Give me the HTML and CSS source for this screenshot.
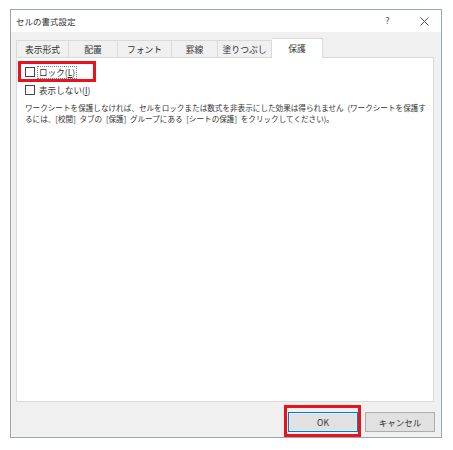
FILE: index.html
```html
<!DOCTYPE html>
<html lang="ja">
<head>
<meta charset="utf-8">
<link rel="stylesheet" href="styles.css">
</head>
<body>
<div class="window">
  <div class="titlebar">
    <span class="title">セルの書式設定</span>
    <span class="help">?</span>
    <span class="close">
      <svg width="9" height="9" viewBox="0 0 9 9"><path d="M0.5 0.5 L8.5 8.5 M8.5 0.5 L0.5 8.5" stroke="#555" stroke-width="1" fill="none"/></svg>
    </span>
  </div>
  <div class="body">
    <div class="tabs">
      <div class="tab t1">表示形式</div>
      <div class="tab t2">配置</div>
      <div class="tab t3">フォント</div>
      <div class="tab t4">罫線</div>
      <div class="tab t5">塗りつぶし</div>
      <div class="tab active">保護</div>
    </div>
    <div class="panel">
      <div class="check first">
        <span class="box"></span><span class="label focus">ロック(<u>L</u>)</span>
        <span class="redbox redbox-lock"></span>
      </div>
      <div class="check">
        <span class="box"></span><span class="label">表示しない(<u>I</u>)</span>
      </div>
      <p class="note">ワークシートを保護しなければ、セルをロックまたは数式を非表示にした効果は得られません (ワークシートを保護す<br>るには、[校閲] タブの [保護] グループにある [シートの保護] をクリックしてください)。</p>
    </div>
    <div class="buttons">
      <div class="btn ok">OK<span class="redbox redbox-ok"></span></div>
      <div class="btn">キャンセル</div>
    </div>
  </div>
</div>
</body>
</html>
```

FILE: styles.css
```css
html, body {
  margin: 0;
  padding: 0;
  background: #ffffff;
}
body {
  font-family: "Noto Sans CJK JP", "Noto Sans", sans-serif;
  color: #333;
}
.window {
  margin: 9px 0 0 10px;
  width: 432px;
  height: 429px;
  box-sizing: border-box;
  border: 1px solid #9ba6b3;
  background: #f0f0f0;
  display: flex;
  flex-direction: column;
}
.titlebar {
  height: 22px;
  background: #ffffff;
  display: flex;
  align-items: center;
  padding-left: 5px;
  font-size: 8.5px;
  color: #333;
}
.title {
  flex: 1;
}
.help {
  width: 12px;
  font-size: 9px;
  color: #555;
  margin-right: 23px;
  font-family: "DejaVu Sans", sans-serif;
}
.close {
  width: 9px;
  height: 9px;
  margin-right: 12px;
  display: flex;
}
.body {
  flex: 1;
  padding: 6px 6px 0 5px;
  display: flex;
  flex-direction: column;
}
.tabs {
  display: flex;
  height: 19px;
  align-items: flex-end;
}
.tab {
  height: 17px;
  box-sizing: border-box;
  border: 1px solid #dadada;
  border-bottom: none;
  border-left: none;
  font-size: 8.8px;
  display: flex;
  align-items: center;
  justify-content: center;
  color: #333;
  background: #f0f0f0;
}
.t1 { width: 53px; border-left: 1px solid #dadada; }
.t2 { width: 49px; }
.t3 { width: 54px; }
.t4 { width: 46px; }
.t5 { width: 54px; }
.tab.active {
  width: 51px;
  height: 20px;
  background: #ffffff;
  margin-bottom: -1px;
  position: relative;
  z-index: 1;
}
.panel {
  height: 345px;
  box-sizing: border-box;
  background: #ffffff;
  border: 1px solid #dadada;
  margin-right: 1px;
  padding: 8px 8px 0 8px;
}
.check {
  display: flex;
  align-items: center;
  height: 12px;
  margin-bottom: 6px;
  position: relative;
}
.box {
  width: 8px;
  height: 8px;
  border: 1px solid #444;
  background: #fff;
  margin-right: 3px;
}
.label {
  font-size: 8.6px;
  line-height: 11px;
  padding: 0 1px;
  color: #333;
}
.label.focus {
  outline: 1px dotted #777;
}
.label u {
  text-decoration: underline;
}
.note {
  margin: 5px 0 0 0;
  font-size: 7.6px;
  line-height: 11px;
  word-spacing: 2px;
  color: #333;
  white-space: nowrap;
}
.buttons {
  display: flex;
  justify-content: flex-end;
  gap: 7px;
  margin-top: 10px;
}
.btn {
  width: 70px;
  height: 20px;
  box-sizing: border-box;
  background: #e1e1e1;
  border: 1px solid #adadad;
  font-size: 8.5px;
  display: flex;
  align-items: center;
  justify-content: center;
  color: #333;
  position: relative;
}
.btn.ok {
  border: 1px solid #0078d7;
  box-shadow: inset 0 0 0 1px #e8eef6;
}
.redbox {
  position: absolute;
  border: 3px solid #e8131b;
  box-sizing: border-box;
  pointer-events: none;
}
.redbox-lock {
  left: -7px;
  top: -5px;
  width: 78px;
  height: 21px;
}
.redbox-ok {
  left: -5px;
  top: -8px;
  right: -4px;
  bottom: -6px;
}
```
